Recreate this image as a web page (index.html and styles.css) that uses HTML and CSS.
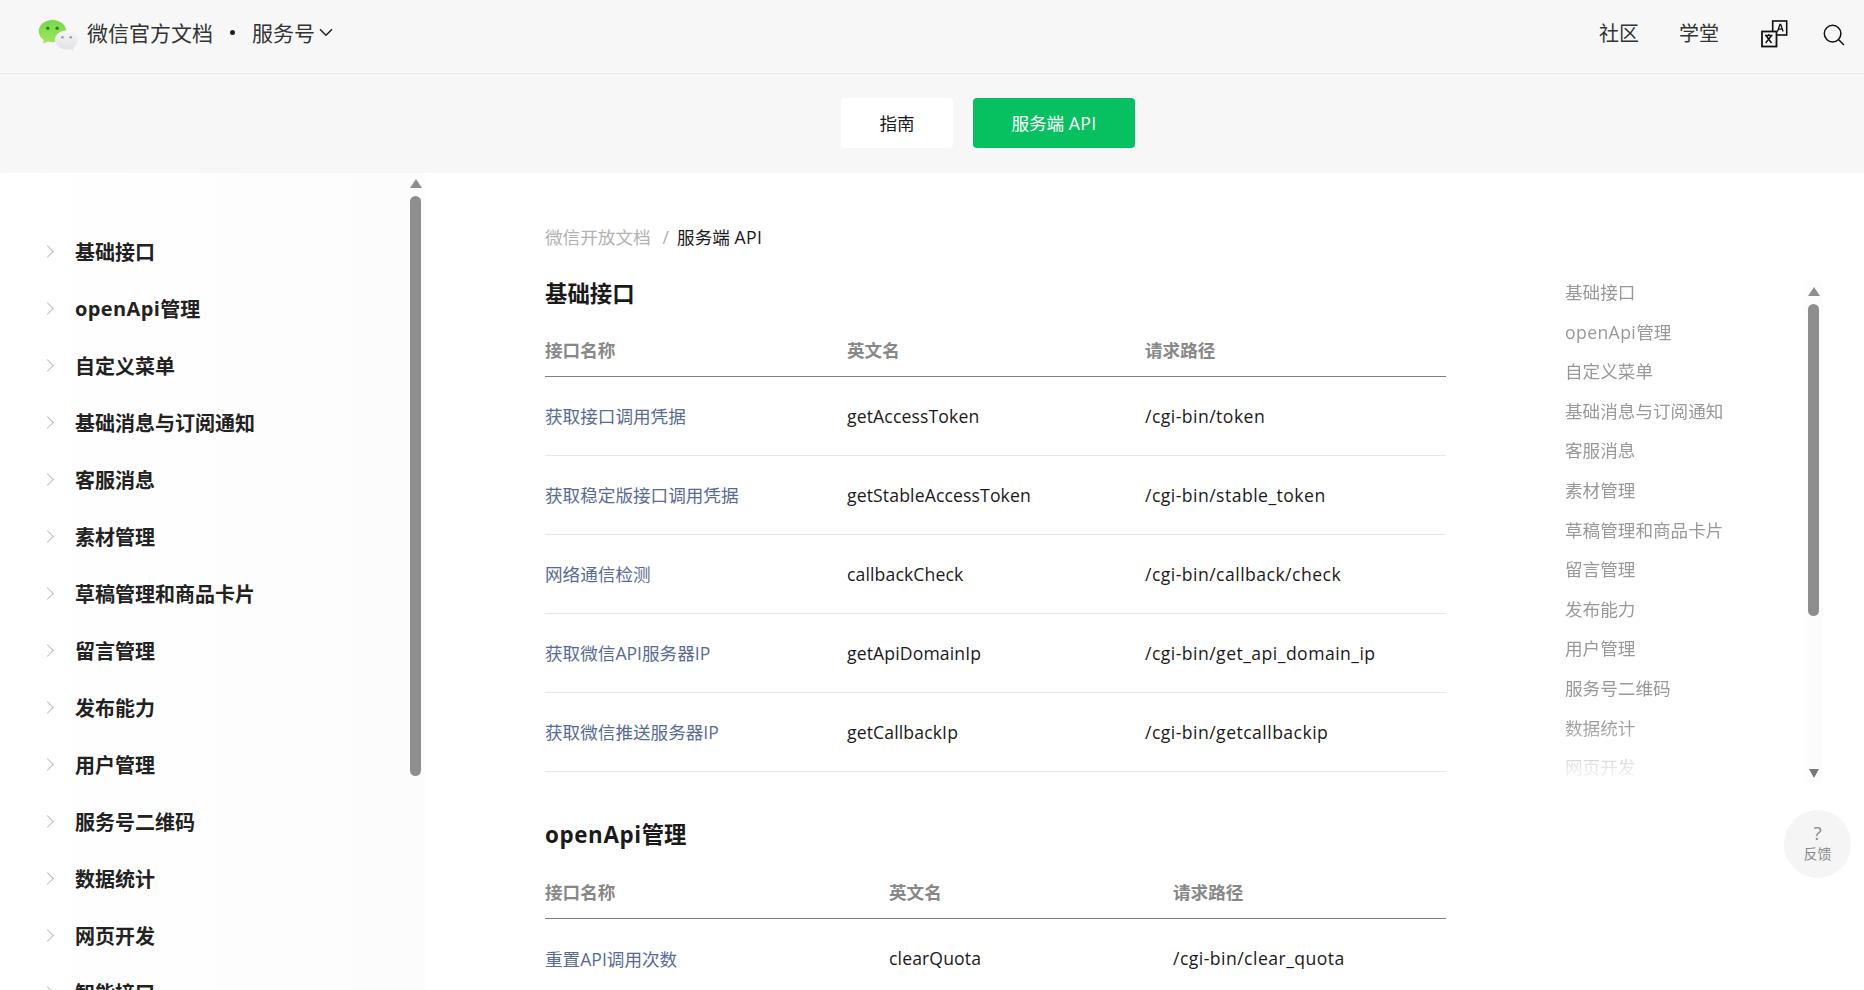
FILE: index.html
```html
<!DOCTYPE html>
<html lang="zh-CN">
<head>
    <meta charset="UTF-8">
    <title>微信开放文档 - 服务端 API</title>
    <link rel="stylesheet" href="styles.css">
</head>
<body>
    <header class="header">
        <a href="#" class="brand">
            <svg class="logo" width="42" height="34" viewBox="0 0 42 34">
                <defs>
                    <linearGradient id="greenBubble" x1="0" y1="0" x2="0" y2="1">
                        <stop offset="0" stop-color="#78d848"/>
                        <stop offset="1" stop-color="#a2e75e"/>
                    </linearGradient>
                    <linearGradient id="greyBubble" x1="0" y1="0" x2="0" y2="1">
                        <stop offset="0" stop-color="#f7f7f9"/>
                        <stop offset="1" stop-color="#dfe0e5"/>
                    </linearGradient>
                </defs>
                <path d="M14.5 0C6.8 0 .7 5 .7 11.2c0 3.600 2 6.700 5.100 8.800L4.700 23.700l4.700-2.300c1.600.5 3.300.8 5.100.8 7.700 0 13.800-5 13.800-11S22.200 0 14.500 0z" fill="url(#greenBubble)"/>
                <circle cx="9.800" cy="8.300" r="1.700" fill="#1c8a2c"/>
                <circle cx="19.200" cy="8.300" r="1.700" fill="#1c8a2c"/>
                <path d="M28.400 10.500c-6.300 0-11.500 4.300-11.500 9.500s5.200 9.500 11.500 9.500c1.300 0 2.500-.2 3.700-.5l3.500 2.200-.8-3.300c2.900-1.700 4.800-4.600 4.800-7.900 0-5.200-4.900-9.500-10.700-9.500z" fill="url(#greyBubble)"/>
                <circle cx="24.400" cy="17.300" r="1.300" fill="#9a9ca3"/>
                <circle cx="32.700" cy="17.300" r="1.300" fill="#9a9ca3"/>
            </svg>
            <span class="brand-title">微信官方文档</span>
        </a>
        <span class="brand-dot"></span>
        <a href="#" class="brand-scope">服务号
            <svg class="scope-caret" width="14" height="9" viewBox="0 0 14 9"><path d="M1 1.200l6 6 6-6" fill="none" stroke="#222" stroke-width="1.600"/></svg>
        </a>
        <nav class="header-links">
            <a href="#" class="link-community">社区</a>
            <a href="#" class="link-school">学堂</a>
            <svg class="icon-lang" width="27" height="28" viewBox="0 0 27 28">
                <rect x="11.700" y="1" width="14" height="14" fill="none" stroke="#111" stroke-width="1.600"/>
                <rect x="1" y="11.500" width="14.500" height="15" fill="#f7f7f7" stroke="#111" stroke-width="1.800"/>
                <path d="M16.500 11.500l2.400-7h.8l2.400 7M17.500 9.200h4.200" fill="none" stroke="#111" stroke-width="1.300"/>
                <path d="M4 15.500h7.500M7.800 14v1.500M5.200 15.800l5.300 7.200M10.400 15.800l-5.800 7.200" fill="none" stroke="#111" stroke-width="1.500"/>
            </svg>
            <svg class="icon-search" width="22" height="22" viewBox="0 0 22 22">
                <circle cx="9.600" cy="9.600" r="8.300" fill="none" stroke="#111" stroke-width="1.500"/>
                <path d="M15.500 15.500l5.500 5.500" fill="none" stroke="#111" stroke-width="1.500"/>
            </svg>
        </nav>
    </header>

    <div class="subnav">
        <a href="#" class="tab">指南</a>
        <a href="#" class="tab tab-active">服务端 <span class="latin">API</span></a>
    </div>

    <div class="layout">
        <aside class="sidebar">
            <ul class="side-list">
                <li><i class="chevron"></i>基础接口</li>
                <li><i class="chevron"></i><span class="latin">openApi</span>管理</li>
                <li><i class="chevron"></i>自定义菜单</li>
                <li><i class="chevron"></i>基础消息与订阅通知</li>
                <li><i class="chevron"></i>客服消息</li>
                <li><i class="chevron"></i>素材管理</li>
                <li><i class="chevron"></i>草稿管理和商品卡片</li>
                <li><i class="chevron"></i>留言管理</li>
                <li><i class="chevron"></i>发布能力</li>
                <li><i class="chevron"></i>用户管理</li>
                <li><i class="chevron"></i>服务号二维码</li>
                <li><i class="chevron"></i>数据统计</li>
                <li><i class="chevron"></i>网页开发</li>
                <li><i class="chevron"></i>智能接口</li>
            </ul>
            <div class="scrollbar side-scroll">
                <i class="arrow-up"></i>
                <i class="thumb"></i>
            </div>
        </aside>

        <main class="main">
            <div class="crumbs">
                <a href="#">微信开放文档</a>
                <span class="crumb-sep">/</span>
                <span>服务端 <span class="latin">API</span></span>
            </div>

            <h2>基础接口</h2>
            <table class="api-table table-a">
                <thead>
                    <tr><th class="col-name">接口名称</th><th class="col-en">英文名</th><th>请求路径</th></tr>
                </thead>
                <tbody>
                    <tr><td><a href="#">获取接口调用凭据</a></td><td class="en">getAccessToken</td><td class="path">/cgi-bin/token</td></tr>
                    <tr><td><a href="#">获取稳定版接口调用凭据</a></td><td class="en">getStableAccessToken</td><td class="path">/cgi-bin/stable_token</td></tr>
                    <tr><td><a href="#">网络通信检测</a></td><td class="en">callbackCheck</td><td class="path">/cgi-bin/callback/check</td></tr>
                    <tr><td><a href="#">获取微信API服务器IP</a></td><td class="en">getApiDomainIp</td><td class="path">/cgi-bin/get_api_domain_ip</td></tr>
                    <tr><td><a href="#">获取微信推送服务器IP</a></td><td class="en">getCallbackIp</td><td class="path">/cgi-bin/getcallbackip</td></tr>
                </tbody>
            </table>

            <h2 class="second"><span class="latin">openApi</span>管理</h2>
            <table class="api-table table-b">
                <thead>
                    <tr><th class="col-name">接口名称</th><th class="col-en">英文名</th><th>请求路径</th></tr>
                </thead>
                <tbody>
                    <tr><td><a href="#">重置API调用次数</a></td><td class="en">clearQuota</td><td class="path">/cgi-bin/clear_quota</td></tr>
                </tbody>
            </table>
        </main>

        <aside class="toc">
            <ul class="toc-list">
                <li>基础接口</li>
                <li><span class="latin">openApi</span>管理</li>
                <li>自定义菜单</li>
                <li>基础消息与订阅通知</li>
                <li>客服消息</li>
                <li>素材管理</li>
                <li>草稿管理和商品卡片</li>
                <li>留言管理</li>
                <li>发布能力</li>
                <li>用户管理</li>
                <li>服务号二维码</li>
                <li>数据统计</li>
                <li>网页开发</li>
            </ul>
            <div class="scrollbar toc-scroll">
                <i class="arrow-up"></i>
                <i class="thumb"></i>
                <i class="arrow-down"></i>
            </div>
        </aside>
    </div>

    <a href="#" class="feedback">
        <span class="feedback-mark">?</span>
        <span class="feedback-text">反馈</span>
    </a>
</body>
</html>
```

FILE: styles.css
```css
* {
    margin: 0;
    padding: 0;
    box-sizing: border-box;
}

html, body {
    height: 990px;
    overflow: hidden;
}

body {
    position: relative;
    font-family: "Open Sans", "Noto Sans CJK SC", sans-serif;
    font-size: 17.6px;
    color: #1a1a1a;
    background: white;
}

a {
    color: inherit;
    text-decoration: none;
}

ul {
    list-style: none;
}

.latin {
    letter-spacing: 0.4px;
}

/* Top bar */
.header {
    display: flex;
    align-items: center;
    height: 74px;
    padding-left: 38px;
    padding-bottom: 8px;
    background: #f7f7f7;
    border-bottom: 1px solid #e8e8e8;
}

.brand {
    display: flex;
    align-items: center;
}

.logo {
    margin-top: 8px;
    margin-right: 7px;
}

.brand-title,
.brand-scope {
    margin-bottom: 2px;
    font-size: 21px;
    color: #333;
}

.brand-dot {
    width: 5px;
    height: 5px;
    margin: 0 17px 0 17px;
    border-radius: 50%;
    background: #222;
}

.brand-scope {
    display: flex;
    align-items: center;
    gap: 4px;
}

.scope-caret {
    margin-top: 2px;
}

.header-links {
    display: flex;
    align-items: center;
    margin-left: auto;
    padding-right: 19px;
    font-size: 20px;
    color: #333;
}

.link-community {
    margin-right: 40px;
}

.link-school {
    margin-right: 42px;
}

.icon-lang {
    margin-top: 2px;
    margin-right: 35px;
}

.icon-search {
    margin-top: 4px;
}

/* Guide / API tabs */
.subnav {
    display: flex;
    justify-content: center;
    align-items: center;
    gap: 20px;
    height: 99px;
    padding-left: 112px;
    padding-bottom: 2px;
    background: #f7f7f7;
}

.tab {
    display: flex;
    justify-content: center;
    align-items: center;
    width: 112px;
    height: 50px;
    border-radius: 4px;
    background: white;
    white-space: pre;
}

.tab-active {
    width: 162px;
    color: white;
    background: #07c160;
}

.layout {
    display: flex;
    height: 817px;
}

/* Left tree */
.sidebar {
    display: flex;
    flex: none;
    width: 425px;
    background: linear-gradient(90deg, #fff 0%, #fcfcfc 100%);
}

.side-list {
    flex: 1;
    padding-top: 50px;
    font-size: 20px;
    font-weight: 700;
    color: #222;
}

.side-list li {
    display: flex;
    align-items: center;
    height: 57px;
    padding-left: 75px;
    position: relative;
}

.chevron {
    position: absolute;
    left: 43px;
    width: 9px;
    height: 9px;
    border-top: 1.500px solid #bbb;
    border-right: 1.500px solid #bbb;
    transform: rotate(45deg);
}

.scrollbar {
    display: flex;
    flex-direction: column;
    align-items: center;
}

.side-scroll {
    width: 13px;
    margin-right: 3px;
    padding-top: 6px;
}

.thumb {
    display: block;
    width: 11px;
    margin-top: 8px;
    border-radius: 6px;
    background: #8e8e8e;
}

.side-scroll .thumb {
    height: 580px;
}

.arrow-up {
    width: 0;
    height: 0;
    border-left: 6.500px solid transparent;
    border-right: 6.500px solid transparent;
    border-bottom: 9px solid #8e8e8e;
}

.arrow-down {
    width: 0;
    height: 0;
    margin-top: auto;
    border-left: 5px solid transparent;
    border-right: 5px solid transparent;
    border-top: 9px solid #777;
}

/* Centre column */
.main {
    flex: none;
    width: 1021px;
    padding-left: 120px;
}

.crumbs {
    display: flex;
    padding-top: 51px;
    line-height: 26px;
}

.crumbs a {
    color: #b2b2b2;
}

.crumb-sep {
    margin: 0 8px 0 12px;
    color: #b2b2b2;
}

h2 {
    margin-top: 29px;
    font-size: 22.400px;
    line-height: 30px;
    font-weight: 700;
    color: #1a1a1a;
}

h2 .latin {
    letter-spacing: 0.6px;
}

h2.second {
    margin-top: 48px;
}

.api-table {
    width: 901px;
    margin-top: 20px;
    border-collapse: collapse;
    table-layout: fixed;
    text-align: left;
}

.table-b {
    margin-top: 21px;
}

.api-table th {
    height: 47px;
    padding-bottom: 6px;
    font-weight: 700;
    color: #888;
    border-bottom: 1px solid #808080;
}

.table-b th {
    height: 48px;
}

.api-table td {
    height: 79px;
    border-bottom: 1px solid #e8e8e8;
}

.api-table td a {
    color: #576b95;
}

.api-table .en {
    letter-spacing: 0.13px;
}

.api-table .path {
    letter-spacing: 0.46px;
}

.table-a .col-name {
    width: 302px;
}

.table-a .col-en {
    width: 298px;
}

.table-b .col-name {
    width: 344px;
}

.table-b .col-en {
    width: 284px;
}

/* Right outline */
.toc {
    display: flex;
    flex: none;
    width: 399px;
    padding-top: 100px;
    padding-left: 119px;
}

.toc-list {
    flex: none;
    width: 239px;
    height: 510px;
    overflow: hidden;
    color: #999;
    -webkit-mask-image: linear-gradient(180deg, #000 88%, rgba(0, 0, 0, 0.15) 98%);
    mask-image: linear-gradient(180deg, #000 88%, rgba(0, 0, 0, 0.15) 98%);
}

.toc-list li {
    height: 39.600px;
    line-height: 39.600px;
}

.toc-scroll {
    width: 19px;
    height: 502px;
    margin-top: 8px;
    padding: 6px 0 5px;
    background: #fcfcfc;
}

.toc-scroll .thumb {
    height: 312px;
}

.feedback {
    position: absolute;
    left: 1784px;
    top: 810px;
    display: flex;
    flex-direction: column;
    align-items: center;
    width: 67px;
    height: 68px;
    padding-top: 12px;
    border-radius: 50%;
    color: #888;
    background: #f5f5f5;
}

.feedback-mark {
    font-size: 19px;
    line-height: 22px;
}

.feedback-text {
    font-size: 14px;
    line-height: 20px;
}
```
